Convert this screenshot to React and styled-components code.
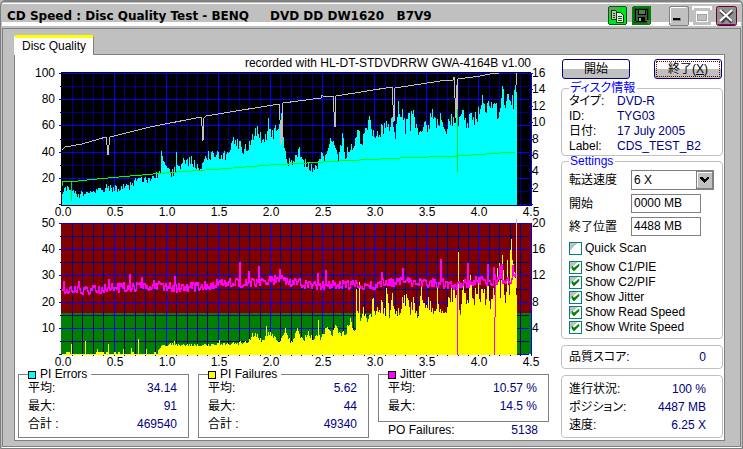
import React, { useState } from "react";
import styled, { createGlobalStyle } from "styled-components";

const GlobalStyle = createGlobalStyle`
  *, *::before, *::after { box-sizing: border-box; }
  body {
    margin: 0;
    background: #c0c0c0;
    color: #000;
    font: 12px/15px "Liberation Sans", "Noto Sans CJK JP", sans-serif;
    font-feature-settings: "palt";
  }
`;

const Window = styled.div`
  min-height: 100vh;
  display: flex;
  flex-direction: column;
  background: #c0c0c0;
  border: 1px solid #808080;
  border-radius: 5px 5px 0 0;
  box-shadow: inset 0 1px 0 #808080;
`;

const TitleBar = styled.header`
  display: flex;
  align-items: flex-start;
  height: 23px;
  padding: 2px 4px 0 5px;
  margin: 2px 1px;
  border-top: 1px solid #fff;
  border-bottom: 4px solid #fff;
`;

const Title = styled.h1`
  flex: 1;
  margin: 0;
  padding-top: 2px;
  font: bold 12px/16px "DejaVu Sans", sans-serif;
  white-space: pre;
`;

const TitleButtons = styled.div`
  display: flex;
  gap: 5px;
  margin-left: ${(p) => (p.$apart ? "18px" : "0")};
`;

const TitleButton = styled.button`
  width: ${(p) => p.$width || 19}px;
  height: 19px;
  padding: 0;
  border: 0;
  background: none;
  display: block;
  svg { display: block; overflow: visible; }
`;

const Client = styled.main`
  flex: 1;
  margin: 0 1px 1px;
  padding: 6px 15px 5px 11px;
  border: 1px solid #808080;
  box-shadow: 0 1px 0 #fff;
`;

const Tab = styled.button`
  display: block;
  position: relative;
  z-index: 1;
  height: 20px;
  margin: 0 0 -1px;
  padding: 0 7px;
  border: 1px solid #808080;
  border-top: 3px solid #ff0;
  border-left-color: #fff;
  border-bottom: 0;
  border-radius: 2px 2px 0 0;
  background: #fff;
  color: #000;
  font: inherit;
`;

const Page = styled.section`
  display: grid;
  grid-template-columns: minmax(0, 1fr) 162px;
  min-height: 387px;
  padding-right: 1px;
  background: #fff;
  border: 1px solid #808080;
`;

const ChartColumn = styled.div`
  display: flex;
  flex-direction: column;
`;

const Caption = styled.p`
  margin: 0;
  padding-right: 30px;
  text-align: right;
  line-height: 17px;
`;

const ChartSvg = styled.svg`
  display: block;
  width: 100%;
  height: auto;
  overflow: visible;
  text { font: 12px "Liberation Sans", sans-serif; fill: #000; }
`;

const Stats = styled.div`
  display: grid;
  grid-template-columns: repeat(3, minmax(0, 1fr));
  gap: 9px;
  align-items: start;
  padding: 1px 12px 0 3px;
`;

const StatBox = styled.fieldset`
  min-width: 0;
  margin: 0;
  padding: 1px 11px ${(p) => (p.$short ? 8 : 6)}px 9px;
  border: 1px solid #808080;
`;

const StatLegend = styled.legend`
  display: flex;
  align-items: center;
  gap: 4px;
  padding: 0 4px 0 0;
  line-height: 11px;
`;

const Swatch = styled.span`
  width: 8px;
  height: 8px;
  border: 1px solid #000;
  background: ${(p) => p.$color};
`;

const StatList = styled.dl`
  display: grid;
  gap: 4px;
  margin: 0;
`;

const Pair = styled.div`
  display: flex;
  justify-content: space-between;
  line-height: ${(p) => p.$line || 14}px;
  dt, dd { margin: 0; }
  dd { color: #000080; }
`;

const Failures = styled.dl`
  margin: 0;
  padding: 1px 11px 0 10px;
`;

const Side = styled.aside`
  display: flex;
  flex-direction: column;
  padding-top: 4px;
`;

const Actions = styled.div`
  display: flex;
  justify-content: space-between;
  padding: 0 1px;
  margin-bottom: 4px;
`;

const ActionButton = styled.button`
  width: 68px;
  height: 20px;
  padding: 0;
  border: 1px solid #000080;
  border-radius: 3px;
  background: linear-gradient(#fff 50%, #c0c0c0 50%);
  color: #000;
  font: inherit;
  line-height: 16px;
  outline: ${(p) => (p.$focused ? "1px dotted #800000" : "0")};
  outline-offset: -3px;
`;

const Group = styled.fieldset`
  min-width: 0;
  margin: 0;
  padding: ${(p) => p.$padding};
  border: 1px solid #c0c0c0;
  border-radius: 4px;
`;

const GroupLegend = styled.legend`
  padding: 0 2px 0 1px;
  color: #00f;
  line-height: 11px;
`;

const Info = styled.dl`
  display: grid;
  grid-template-columns: 48px 1fr;
  margin: 0;
  line-height: 15px;
  dt, dd { margin: 0; height: 15px; white-space: nowrap; }
  dd { color: #000080; }
`;

const Fields = styled.div`
  display: grid;
  grid-template-columns: 62px 1fr;
  row-gap: 4px;
  align-items: center;
  justify-items: start;
  label { line-height: 18px; white-space: nowrap; }
`;

const SelectFrame = styled.div`
  display: grid;
  width: 83px;
  height: 20px;
  border: 1px solid #808080;
  background: #fff;
  > * { grid-area: 1 / 1; }
  svg { justify-self: end; pointer-events: none; }
`;

const Select = styled.select`
  appearance: none;
  width: 100%;
  height: 18px;
  padding: 0 0 0 2px;
  border: 0;
  background: transparent;
  color: #000;
  font: inherit;
`;

const Input = styled.input`
  width: 70px;
  height: 19px;
  padding: 0 0 2px 2px;
  border: 1px solid #808080;
  background: #fff;
  color: #000;
  font: inherit;
`;

const Checks = styled.div`
  display: grid;
  gap: 2px;
  margin-top: 6px;
`;

const CheckLabel = styled.label`
  display: flex;
  align-items: center;
  gap: 3px;
  height: 13px;
  line-height: 13px;
  white-space: nowrap;
  margin-bottom: ${(p) => (p.$spaced ? 4 : 0)}px;
`;

const CheckBox = styled.span`
  display: grid;
  flex: none;
  > * { grid-area: 1 / 1; }
  svg { pointer-events: none; }
`;

const CheckInput = styled.input`
  appearance: none;
  width: 13px;
  height: 13px;
  margin: 0;
  border: 1px solid #008080;
  background: linear-gradient(135deg, #c0c0c0 32%, #fff 33%);
`;

const Readouts = styled.dl`
  margin: 6px 0 0;
`;

/* Chart geometry: drawing units are pixels of the default window. */
const LEFT = 62;
const UNIT = 104.2;
const DATA_END = 516;

const noise = (n) => {
  const v = Math.sin(n * 127.1 + 11.7) * 43758.5453;
  return v - Math.floor(v);
};

const interpolate = (points, x) => {
  for (let i = 1; i < points.length; i += 1) {
    const [x0, y0] = points[i - 1];
    const [x1, y1] = points[i];
    if (x <= x1) return x1 === x0 ? y1 : y0 + ((y1 - y0) * (x - x0)) / (x1 - x0);
  }
  return points[points.length - 1][1];
};

const PIE = [
  [62,193],[65,189],[73,191],[78,195],[85,192],[93,189],[100,190],[107,187],[117,188],[125,187],[130,185],[135,181],
  [145,180],[153,177],[158,174],[160,172],[161,151],[163,162],[167,163],[170,175],[175,169],[176,152],[178,167],[183,160],
  [188,162],[192,158],[195,168],[202,165],[207,156],[212,153],[218,155],[227,155],[231,140],[237,141],[243,151],
  [250,145],[252,134],[257,131],[262,141],[266,138],[268,124],[273,136],[279,121],[281,114],[284,150],[287,163],
  [293,159],[297,156],[299,147],[302,163],[308,164],[313,169],[318,162],[321,152],[325,158],[331,135],[334,147],
  [338,160],[342,138],[345,153],[348,152],[353,145],[358,133],[362,142],[364,127],[369,120],[373,132],[376,136],
  [382,128],[387,125],[390,123],[392,115],[395,133],[398,107],[402,114],[405,128],[409,112],[410,127],[412,105],
  [415,122],[420,133],[423,127],[427,126],[432,115],[435,122],[440,117],[445,132],[450,120],[454,118],[458,120],
  [463,115],[467,126],[470,112],[473,120],[478,113],[481,106],[482,88],[484,108],[490,100],[495,103],[498,115],
  [502,93],[505,100],[507,87],[510,97],[513,103],[515,90],[516,85],
];

const PIF = [
  [62,353],[155,353],[158,350],[162,345],[173,344],[190,345],[203,345],[220,344],[235,343],[247,342],[250,340],[252,333],
  [257,336],[261,341],[264,339],[270,332],[274,338],[279,341],[283,335],[286,332],[290,342],[293,338],[297,330],
  [303,341],[308,331],[313,340],[318,330],[320,338],[327,326],[332,334],[335,326],[340,335],[345,332],[350,322],
  [355,331],[357,315],[361,314],[363,307],[368,319],[371,314],[373,300],[375,312],[378,308],[382,304],[385,314],
  [387,294],[389,312],[392,294],[397,315],[402,301],[407,298],[410,310],[413,297],[417,316],[421,292],[425,312],
  [428,295],[431,312],[435,313],[437,290],[440,312],[445,312],[450,295],[454,289],[457,300],[460,316],[463,286],
  [467,303],[470,279],[473,302],[477,284],[480,300],[482,280],[485,299],[487,280],[490,302],[493,284],[495,304],
  [497,270],[500,292],[502,268],[505,294],[507,272],[509,287],[511,260],[513,276],[516,286],
];

const PIF_PEAKS = {
  71: 344, 85: 341, 97: 349, 108: 344, 123: 349, 131: 348, 138: 339, 146: 349,
  174: 341, 219: 340, 266: 326, 285: 328, 297: 328, 318: 320, 350: 318,
  356: 289, 359: 282, 372: 299, 386: 288, 387: 294, 392: 293, 421: 286, 437: 288,
  454: 286, 458: 252, 470: 275, 497: 268, 499: 263, 502: 255, 507: 260, 510: 250, 511: 239, 513: 264,
};

const JITTER = [
  [62,289],[85,289],[100,288],[130,286],[160,284],[170,287],[200,285],[230,282],[250,282],[270,280],[280,276],
  [290,282],[296,279],[305,284],[350,284],[372,285],[385,281],[400,281],[430,282],[460,284],[475,279],[490,281],
  [502,278],[508,281],[516,274],
];

const JITTER_PEAKS = {
  63: 281, 78: 281, 108: 279, 129: 274, 141: 277, 174: 276, 239: 262, 248: 271, 258: 266, 279: 269,
  317: 273, 325: 270, 381: 272, 402: 268, 440: 259, 467: 263, 487: 264, 493: 267, 499: 266, 501: 264, 512: 265,
};

const SPEED =
  "62,150 65,147 82,144 106,137 107,145 108,155 109,145 110,137 150,127 201,117 202,126 203,141 204,118 206,116 " +
  "279,104 280,120 281,145 282,120 283,103 321,98 322,95 324,97 333,96 335,127 336,96 392,87 394,122 395,88 " +
  "440,81 453,80 454,77 456,118 458,79 480,76 490,74 499,73";

const GREEN = "62,186 62,182 78,181 97,179 130,176 177,172 220,169 283,164 290,164 340,161 400,158 457,156 515,152";

const columns = Array.from({ length: DATA_END - LEFT + 1 }, (_, i) => LEFT + i);

const barsPath = (topAt, base) =>
  `M${LEFT} ${base}` + columns.map((x) => `V${Math.round(topAt(x))}H${x + 1}`).join("") + `V${base}Z`;

const piePath = barsPath((x) => {
  const y = interpolate(PIE, x);
  return y + (noise(x) - 0.45) * (6 + (205 - y) * 0.1);
}, 205);

const pifPath = barsPath((x) => {
  if (PIF_PEAKS[x]) return PIF_PEAKS[x];
  const y = interpolate(PIF, x);
  if (x < 158) return noise(x >> 1) > 0.6 ? 352 : 354;
  return Math.min(353, y + (noise(x) - 0.4) * (354 - y) * 0.28);
}, 355);

/* Each jitter sample is a short vertical stroke from the previous level. */
const jitterLevels = columns.map((x) => JITTER_PEAKS[x] || Math.round(interpolate(JITTER, x) + (noise(x + 900) - 0.5) * 9));
const jitterPath = jitterLevels
  .map((y, i) => {
    const previous = i ? jitterLevels[i - 1] : y;
    return `M${LEFT + i} ${Math.min(y, previous)}h1V${Math.max(y, previous) + 2}h-1Z`;
  })
  .join("");

function Grid({ top, bottom }) {
  const step = (bottom - top) / 10;
  const vertical = Array.from({ length: 46 }, (_, i) => i);
  const horizontal = Array.from({ length: 11 }, (_, i) => i);
  const draw = (major) => (
    <g stroke={major ? "#0000ff" : "#000080"}>
      {horizontal
        .filter((i) => (i % 2 === 0) === major)
        .map((i) => {
          const y = Math.round(top + i * step) + 0.5;
          return <line key={`h${i}`} x1={major ? 59 : 60} x2="529" y1={y} y2={y} />;
        })}
      {vertical
        .filter((i) => (i % 5 === 0) === major && i > 0)
        .map((i) => {
          const x = Math.round(LEFT + (i * UNIT) / 10 - 0.4) + 0.5;
          return <line key={`v${i}`} x1={x} x2={x} y1={top} y2={bottom + 2} />;
        })}
    </g>
  );
  return (
    <>
      {draw(false)}
      {draw(true)}
    </>
  );
}

function Axes({ left, right, top, bottom, rightStep, labelY }) {
  return (
    <g>
      {left.map((v, i) => (
        <text key={`l${v}`} x="55" y={Math.round(top + 4 + (i * (bottom - top)) / 5)} textAnchor="end">{v}</text>
      ))}
      {right.map((v, i) => (
        <text key={`r${v}`} x="532" y={Math.round(top + 4 + i * rightStep)}>{v}</text>
      ))}
      {Array.from({ length: 10 }, (_, i) => (
        <text key={`x${i}`} x={Math.round(63 + i * 52)} y={labelY} textAnchor="middle">{(i / 2).toFixed(1)}</text>
      ))}
    </g>
  );
}

function ErrorsChart() {
  return (
    <ChartSvg viewBox="15 72 546 148" role="img" aria-label="PI Errors" shapeRendering="crispEdges">
      <rect x="61" y="72" width="470" height="134" fill="#000" />
      <Grid top={73} bottom={204} />
      {Array.from({ length: 9 }, (_, i) => (
        <line key={i} x1="529" x2="533" y1={Math.round(73 + i * 16.4) + 0.5} y2={Math.round(73 + i * 16.4) + 0.5} stroke="#00f" />
      ))}
      <path d={piePath} fill="#0ff" />
      <polyline points={SPEED} fill="none" stroke="#c0c0c0" />
      <path d="M280 120H283V140H280ZM335 97H336V127H335ZM394 90H395V120H394ZM456 85H458V118H456Z" fill="#c0c0c0" />
      <polyline points={GREEN} fill="none" stroke="#0f0" />
      <path d="M71 182H72V201H71ZM457 109H458V172H457Z" fill="#00e020" />
      <path d="M516 73H517V85H516Z" fill="#c0c0c0" />
      <Axes left={[100, 80, 60, 40, 20]} right={[16, 14, 12, 10, 8, 6, 4, 2]} top={73} bottom={204} rightStep={16.4} labelY={216} />
    </ChartSvg>
  );
}

function FailuresChart() {
  return (
    <ChartSvg viewBox="15 220 546 148" role="img" aria-label="PI Failures" shapeRendering="crispEdges">
      <rect x="61" y="223" width="470" height="90" fill="#800000" />
      <rect x="61" y="313" width="470" height="41" fill="#008000" />
      <Grid top={223} bottom={354} />
      <path d={pifPath} fill="#ff0" />
      <path d={jitterPath} fill="#f0f" />
      <path d="M457 283H458V355H457ZM494 317H495V355H494ZM495 274H496V317H495Z" fill="#f0f" />
      <path d="M516 219H517V288H516Z" fill="#c0c0c0" />
      <Axes left={[50, 40, 30, 20, 10]} right={[20, 16, 12, 8, 4]} top={223} bottom={354} rightStep={26.2} labelY={366} />
    </ChartSvg>
  );
}

function Stat({ title, color, rows, short }) {
  return (
    <StatBox $short={short}>
      <StatLegend><Swatch $color={color} />{title}</StatLegend>
      <StatList>
        {rows.map(([k, v]) => (
          <Pair key={k}><dt>{k}</dt><dd>{v}</dd></Pair>
        ))}
      </StatList>
    </StatBox>
  );
}

function CopyIcon() {
  return (
    <svg width="19" height="19" shapeRendering="crispEdges">
      <rect x=".5" y=".5" width="18" height="18" rx="2" fill="#00e020" stroke="#006000" />
      <path d="M1 1H13L9 4H3V10L1 13Z" fill="#60a060" />
      <path d="M3.500 4.500H7.500L9.500 6.500V13.500H3.500Z" fill="#c0c0c0" stroke="#004000" />
      <path d="M8.500 6.500H12.500L15.500 9.500V16.500H8.500Z" fill="#e8e8e8" stroke="#004000" />
      <path d="M5 7H7M5 9H7M5 11H7M10 10H14M10 12H14M10 14H14" stroke="#006000" />
    </svg>
  );
}

function SaveIcon() {
  return (
    <svg width="19" height="19" shapeRendering="crispEdges">
      <rect x="1" y="1" width="17" height="17" rx="1" fill="#205020" stroke="#008000" strokeWidth="2" />
      <path d="M3 3H16V16H4L3 15Z" fill="#000" />
      <path d="M4 4H15V15H4Z" fill="#386038" />
      <path d="M6 3H14V9H6Z" fill="#000" />
      <path d="M7 4H13V8H7Z" fill="#508050" />
      <path d="M6 11H13V16H6Z" fill="#000" />
      <path d="M7 12H9V15H7Z" fill="#a0b0a0" />
      <path d="M14 14H18V18H16Z" fill="#507050" />
    </svg>
  );
}

function MinimizeIcon() {
  return (
    <svg width="19" height="19" shapeRendering="crispEdges">
      <rect x=".5" y=".5" width="19" height="19" rx="2" fill="#c0c0c0" stroke="#808080" />
      <path d="M2 1.500H17M1.500 2V17" stroke="#fff" />
      <path d="M4 12H12V15H4Z" fill="#808080" />
      <path d="M4 12H11V14H4Z" fill="#000" />
    </svg>
  );
}

function MaximizeIcon() {
  return (
    <svg width="18" height="19" shapeRendering="crispEdges">
      <rect x="0" y="2" width="18" height="17" fill="#c0c0c0" />
      <path d="M0 4V1H18V4" fill="none" stroke="#fff" strokeWidth="2" />
      <rect x="3.500" y="5.500" width="11" height="10" fill="none" stroke="#fff" />
      <path d="M4 6.500H14" stroke="#fff" strokeWidth="2" />
      <path d="M4.500 15V8.500H13.500V14.500H4" fill="none" stroke="#a0a0a0" />
    </svg>
  );
}

function CloseIcon() {
  return (
    <svg width="21" height="19">
      <rect x=".5" y=".5" width="20" height="19" rx="2" fill="#909090" stroke="#700020" />
      <path d="M2 18.500H19" stroke="#800080" />
      <path d="M5 5L16 16M16 5L5 16" stroke="#404040" strokeWidth="4" />
      <path d="M4 4L16 15M16 4L4 15" stroke="#fff" strokeWidth="2" />
    </svg>
  );
}

const OPTIONS = ["Quick Scan", "Show C1/PIE", "Show C2/PIF", "Show Jitter", "Show Read Speed", "Show Write Speed"];

function Check({ label, initial, spaced }) {
  const [on, setOn] = useState(initial);
  return (
    <CheckLabel $spaced={spaced}>
      <CheckBox>
        <CheckInput type="checkbox" checked={on} onChange={() => setOn(!on)} />
        {on && (
          <svg width="13" height="13">
            <path d="M3 5L5 7L10 3V5L5 10L3 8Z" fill="#008000" stroke="#008000" strokeWidth=".5" />
          </svg>
        )}
      </CheckBox>
      {label}
    </CheckLabel>
  );
}

export default function App() {
  return (
    <>
      <GlobalStyle />
      <Window>
        <TitleBar>
          <Title>{"CD Speed : Disc Quality Test - BENQ     DVD DD DW1620   B7V9"}</Title>
          <TitleButtons>
            <TitleButton aria-label="Copy"><CopyIcon /></TitleButton>
            <TitleButton aria-label="Save"><SaveIcon /></TitleButton>
          </TitleButtons>
          <TitleButtons $apart>
            <TitleButton aria-label="Minimize"><MinimizeIcon /></TitleButton>
            <TitleButton aria-label="Maximize" $width={18}><MaximizeIcon /></TitleButton>
            <TitleButton aria-label="Close" $width={21}><CloseIcon /></TitleButton>
          </TitleButtons>
        </TitleBar>
        <Client>
          <Tab>Disc Quality</Tab>
          <Page>
            <ChartColumn>
              <Caption>recorded with HL-DT-STDVDRRW GWA-4164B v1.00</Caption>
              <ErrorsChart />
              <FailuresChart />
              <Stats>
                <Stat title="PI Errors" color="#0ff" rows={[["平均:", "34.14"], ["最大:", "91"], ["合計 :", "469540"]]} />
                <Stat title="PI Failures" color="#ff0" rows={[["平均:", "5.62"], ["最大:", "44"], ["合計 :", "49340"]]} />
                <div>
                  <Stat short title="Jitter" color="#f0f" rows={[["平均:", "10.57 %"], ["最大:", "14.5 %"]]} />
                  <Failures>
                    <Pair><dt>PO Failures:</dt><dd>5138</dd></Pair>
                  </Failures>
                </div>
              </Stats>
            </ChartColumn>
            <Side>
              <Actions>
                <ActionButton>開始</ActionButton>
                <ActionButton $focused>終了(<u>X</u>)</ActionButton>
              </Actions>
              <Group $padding="0 7px 1px">
                <GroupLegend>ディスク情報</GroupLegend>
                <Info>
                  <dt>タイプ:</dt><dd>DVD-R</dd>
                  <dt>ID:</dt><dd>TYG03</dd>
                  <dt>日付:</dt><dd>17 July 2005</dd>
                  <dt>Label:</dt><dd>CDS_TEST_B2</dd>
                </Info>
              </Group>
              <Group $padding="3px 7px 4px">
                <GroupLegend>Settings</GroupLegend>
                <Fields>
                  <label htmlFor="speed">転送速度</label>
                  <SelectFrame>
                    <Select id="speed" defaultValue="6 X">
                      <option>6 X</option>
                    </Select>
                    <svg width="17" height="18" shapeRendering="crispEdges">
                      <rect x=".5" y=".5" width="16" height="17" fill="#c0c0c0" stroke="#808080" />
                      <path d="M1.500 16V1.500H16" fill="none" stroke="#fff" />
                      <path d="M4 6H6L8.500 8.500L11 6H13V8L8.500 12L4 8Z" fill="#000" />
                    </svg>
                  </SelectFrame>
                  <label htmlFor="start">開始</label>
                  <Input id="start" defaultValue="0000 MB" />
                  <label htmlFor="end">終了位置</label>
                  <Input id="end" defaultValue="4488 MB" />
                </Fields>
                <Checks>
                  {OPTIONS.map((label, i) => (
                    <Check key={label} label={label} initial={i > 0} spaced={i === 0} />
                  ))}
                </Checks>
              </Group>
              <Readouts>
                <Group as="div" $padding="2px 16px 2px 7px">
                  <Pair $line={18}><dt>品質スコア:</dt><dd>0</dd></Pair>
                </Group>
              </Readouts>
              <Readouts>
                <Group as="div" $padding="4px 16px 3px 7px">
                  <Pair $line={18}><dt>進行状況:</dt><dd>100 %</dd></Pair>
                  <Pair $line={18}><dt>ポジション:</dt><dd>4487 MB</dd></Pair>
                  <Pair $line={18}><dt>速度:</dt><dd>6.25 X</dd></Pair>
                </Group>
              </Readouts>
            </Side>
          </Page>
        </Client>
      </Window>
    </>
  );
}
